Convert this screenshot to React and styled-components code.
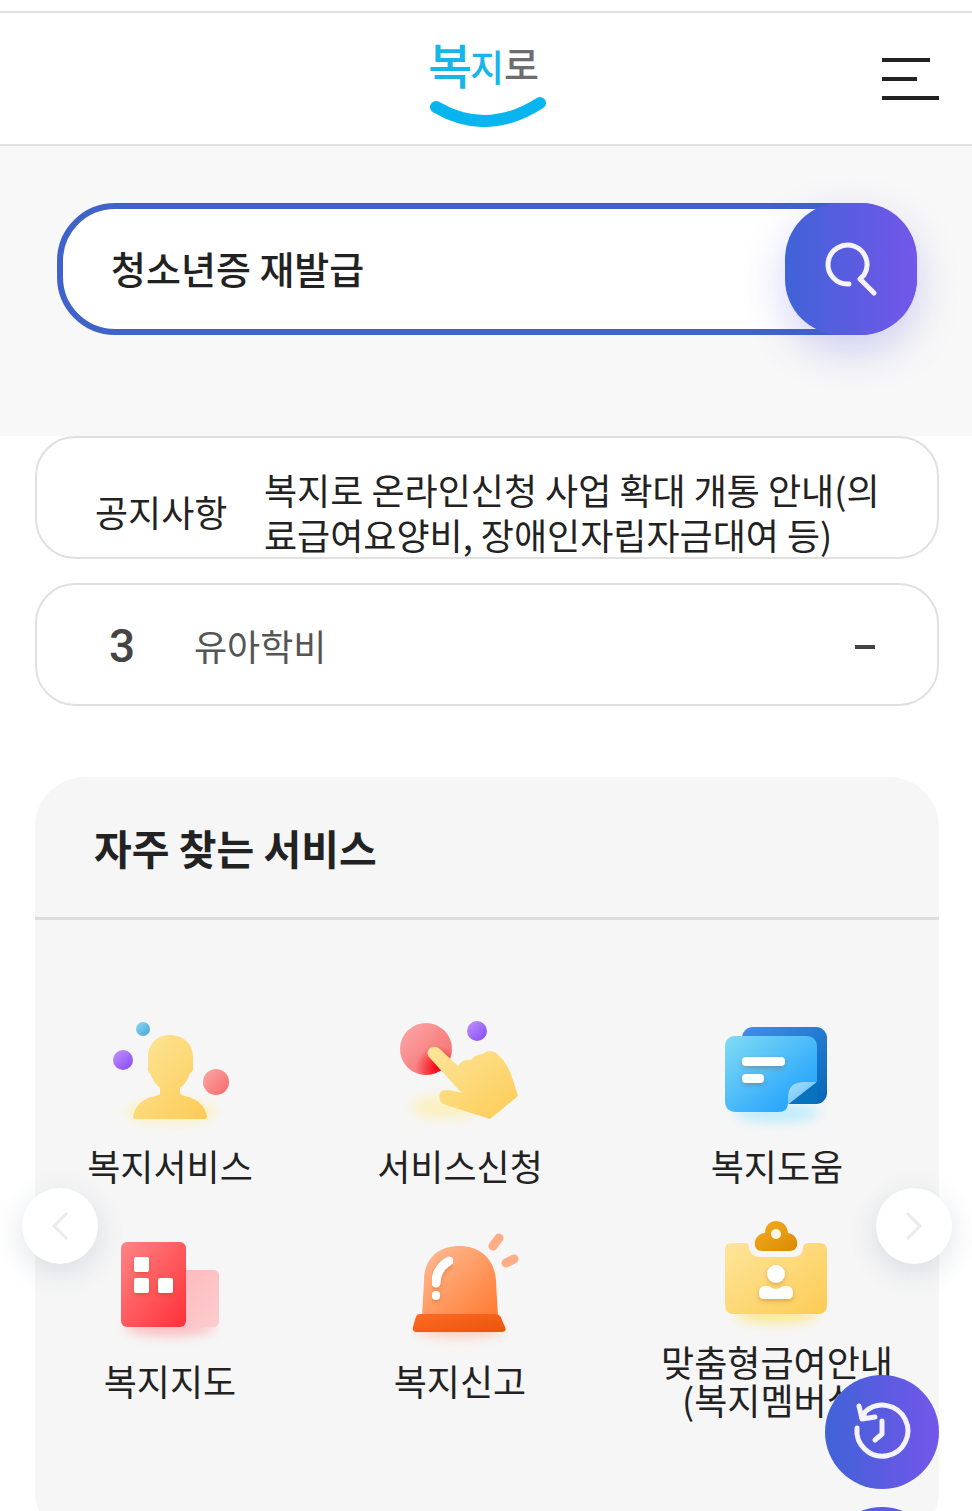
import React from "react";
import styled, { createGlobalStyle } from "styled-components";

const GlobalStyle = createGlobalStyle`
  * { box-sizing: border-box; }
  body { margin: 0; background: #fff; color: #222; }
  body, button, input {
    font-family: "Noto Sans CJK KR", "Noto Sans", sans-serif;
  }
  button { border: 0; padding: 0; cursor: pointer; }
  h2, p, ul { margin: 0; padding: 0; }
  svg { display: block; overflow: visible; }
`;

const brand = "linear-gradient(90deg, #4063d8 0%, #5a5ce0 50%, #7357ea 100%)";

const Screen = styled.div`
  position: relative;
  height: 100vh;
  overflow: hidden;
`;

const Scroller = styled.div`
  height: 100%;
  overflow-y: auto;
  scrollbar-width: none;
  padding-top: 11px;
`;

const Header = styled.header`
  display: grid;
  grid-template-columns: 1fr auto 1fr;
  align-items: center;
  height: 135px;
  padding: 0 33px;
  border: solid #e0e0e0;
  border-width: 2px 0;
`;

const LogoLink = styled.a`
  grid-column: 2;
  text-decoration: none;
`;

const MenuButton = styled.button`
  justify-self: end;
  background: none;
`;

const SearchSection = styled.section`
  height: 290px;
  padding: 57px 55px 0 57px;
  background: #f8f8f8;
`;

const SearchForm = styled.form`
  display: flex;
  align-items: center;
  height: 132px;
  border: 6px solid #4063c9;
  border-radius: 58px;
  background: #fff;
`;

const SearchInput = styled.input`
  flex: 1;
  min-width: 0;
  height: 100%;
  padding: 0 0 4px 48px;
  border: 0;
  outline: 0;
  background: none;
  color: #222;
  font-size: 38px;
  font-weight: 500;
`;

const SearchButton = styled.button`
  display: grid;
  place-items: center;
  flex: none;
  width: 132px;
  height: 132px;
  margin-right: -6px;
  border-radius: 56px;
  background: ${brand};
  box-shadow: 0 16px 40px rgba(80, 80, 220, 0.25);
`;

const Main = styled.main`
  display: flex;
  flex-direction: column;
  padding: 0 33px 24px 35px;
`;

const Bar = styled.section`
  display: flex;
  align-items: center;
  height: 123px;
  margin-bottom: 24px;
  padding: 0 44px 0 58px;
  border: 2px solid #e0e0e0;
  border-radius: 40px;
  background: #fff;
  font-size: 36px;
`;

const NoticeTitle = styled.h2`
  flex: none;
  width: 169px;
  padding-top: 28px;
  line-height: 45px;
  font-size: 36px;
  font-weight: 400;
`;

const NoticeText = styled.a`
  padding-top: 28px;
  color: #222;
  line-height: 45px;
  text-decoration: none;
  word-break: break-all;
`;

const Rank = styled.span`
  width: 99px;
  padding: 2px 0 0 14px;
  color: #444;
  font-family: Roboto, sans-serif;
  font-size: 46px;
  font-weight: 500;
`;

const RankName = styled.a`
  flex: 1;
  color: #555;
  text-decoration: none;
`;

const RankChange = styled.span`
  width: 20px;
  height: 4px;
  margin: 4px 18px 0 0;
  background: #444;
`;

const Panel = styled.section`
  margin-top: 47px;
  border-radius: 50px;
  background: #f6f6f6;
`;

const PanelTitle = styled.h2`
  height: 143px;
  padding-left: 59px;
  border-bottom: 3px solid #ddd;
  line-height: 140px;
  font-size: 41px;
  font-weight: 700;
`;

const Carousel = styled.div`
  position: relative;
  padding: 72px 0 120px;
`;

const ServiceGrid = styled.ul`
  display: grid;
  grid-template-columns: 270fr 310fr 324fr;
  grid-auto-rows: 215px;
  list-style: none;
`;

const ServiceItem = styled.li`
  display: grid;
  place-items: center;
`;

const ServiceLink = styled.a`
  display: flex;
  flex-direction: column;
  align-items: center;
  gap: 20px;
  color: #222;
  font-size: 36px;
  line-height: 38px;
  text-align: center;
  text-decoration: none;
  white-space: pre-line;
`;

const ArrowButton = styled.button`
  position: absolute;
  top: 268px;
  ${(p) => (p.$side === "left" ? "left: -13px;" : "right: -13px;")}
  display: grid;
  place-items: center;
  width: 76px;
  height: 76px;
  border-radius: 50%;
  background: #fff;
  box-shadow: 0 8px 28px rgba(60, 80, 110, 0.16);
`;

const FloatingMenu = styled.div`
  position: absolute;
  right: 33px;
  bottom: -110px;
  display: flex;
  flex-direction: column;
  gap: 18px;
`;

const FloatingButton = styled.button`
  display: grid;
  place-items: center;
  width: 114px;
  height: 114px;
  border-radius: 50%;
  background: ${brand};
`;

const Glyph = styled.text`
  font-family: "Noto Sans CJK KR", sans-serif;
  font-weight: 500;
  font-size: ${(p) => p.$size}px;
  fill: ${(p) => p.$color};
`;

function Logo() {
  return (
    <svg width="118" height="96" viewBox="0 0 118 96" role="img" aria-label="복지로">
      <Glyph x="1" y="53" $size={48} $color="#16b5ea">복</Glyph>
      <Glyph x="43" y="51" $size={37} $color="#16b5ea">지</Glyph>
      <Glyph x="77" y="48" $size={38} $color="#6d6d70">로</Glyph>
      <path d="M9 76 Q60 106 113 72" fill="none" stroke="#08b5ef" strokeWidth="12" strokeLinecap="round" />
    </svg>
  );
}

function Gradient({ id, from, to }) {
  return (
    <linearGradient id={id} x1="0" y1="0" x2="1" y2="1">
      <stop offset="0" stopColor={from} />
      <stop offset="1" stopColor={to} />
    </linearGradient>
  );
}

function Icon({ id, children }) {
  return (
    <svg width="130" height="110" viewBox="0 0 130 110" aria-hidden="true">
      <defs>
        <Gradient id={`${id}-yellow`} from="#fde69a" to="#fdcb55" />
        <Gradient id={`${id}-red`} from="#fca9a9" to="#f56868" />
        <Gradient id={`${id}-violet`} from="#c094ff" to="#8648f2" />
        <filter id={`${id}-blur`} x="-50%" y="-100%" width="200%" height="300%">
          <feGaussianBlur stdDeviation="6" />
        </filter>
        <filter id={`${id}-drop`} x="-30%" y="-30%" width="160%" height="180%">
          <feDropShadow dx="0" dy="2" stdDeviation="2" floodColor="#8a3b00" floodOpacity="0.3" />
        </filter>
      </defs>
      {children}
    </svg>
  );
}

function PersonIcon() {
  return (
    <Icon id="person">
      <defs><Gradient id="person-sky" from="#90d8f4" to="#45a5d4" /></defs>
      <ellipse cx="66" cy="96" rx="46" ry="11" fill="#ffed98" opacity=".55" filter="url(#person-blur)" />
      <path d="M65 19C51 19 43 29 43 41V51C42 52 43 56 45 57C47 64 51 68 55 72V77C55 80 48 80 43 82C34 86 29 93 28 101Q28 103 30 103H100Q102 103 102 101C101 93 96 86 87 82C82 80 75 80 75 76V72C80 68 83 64 85 57C88 56 89 52 88 50V41C88 29 79 19 65 19Z" fill="url(#person-yellow)" />
      <circle cx="38" cy="13" r="7" fill="url(#person-sky)" />
      <circle cx="18" cy="44" r="10" fill="url(#person-violet)" />
      <circle cx="111" cy="66" r="13" fill="url(#person-red)" />
    </Icon>
  );
}

function TouchIcon() {
  return (
    <Icon id="touch">
      <defs>
        <radialGradient id="touch-glow" cx="0.72" cy="0.86" r="0.42">
          <stop offset="0" stopColor="#f50010" />
          <stop offset="1" stopColor="#f50010" stopOpacity="0" />
        </radialGradient>
      </defs>
      <ellipse cx="50" cy="91" rx="34" ry="12" fill="#ffed98" opacity=".55" filter="url(#touch-blur)" />
      <circle cx="31" cy="33" r="26" fill="url(#touch-red)" />
      <circle cx="31" cy="33" r="26" fill="url(#touch-glow)" />
      <circle cx="82" cy="15" r="10" fill="url(#touch-violet)" />
      <path d="M34 41C30 36 35 30 40 31C43 31 45 33 47 35L63 50C66 45 70 43 76 44C79 40 84 38 88 38C92 34 99 34 103 39C114 48 117 61 123 80L95 103L51 89C44 87 43 80 46 76C50 72 57 75 67 77L62 72Z" fill="url(#touch-yellow)" />
    </Icon>
  );
}

function NoteIcon() {
  return (
    <Icon id="note">
      <defs>
        <Gradient id="note-back" from="#438eea" to="#0467b7" />
        <Gradient id="note-front" from="#81dcf3" to="#1499ff" />
        <Gradient id="note-fold" from="#a8e0fd" to="#5db9f3" />
      </defs>
      <ellipse cx="65" cy="97" rx="43" ry="9" fill="#9ee7ff" opacity=".65" filter="url(#note-blur)" />
      <rect x="30" y="11" width="85" height="77" rx="11" fill="url(#note-back)" />
      <path d="M23 20H94C101 20 105 24 105 31V66H92Q76 66 76 81V87Q76 96 66 96H24C17 96 13 92 13 85V31C13 24 17 20 23 20Z" fill="url(#note-front)" />
      <path d="M105 66L77 88H76V81Q76 66 92 66Z" fill="url(#note-fold)" />
      <path d="M105 66V88H77Z" fill="#0872bf" />
      <g fill="#fff" filter="url(#note-drop)">
        <rect x="30" y="41" width="43" height="9" rx="4" />
        <rect x="30" y="58" width="22" height="9" rx="4" />
      </g>
    </Icon>
  );
}

function BuildingIcon() {
  return (
    <Icon id="building">
      <defs>
        <Gradient id="building-front" from="#ff8585" to="#ff3038" />
        <Gradient id="building-side" from="#ffb7ba" to="#fccdcf" />
      </defs>
      <ellipse cx="65" cy="96" rx="45" ry="9" fill="#ff979e" opacity=".6" filter="url(#building-blur)" />
      <rect x="66" y="39" width="48" height="57" rx="5" fill="url(#building-side)" />
      <rect x="16" y="11" width="65" height="85" rx="6" fill="url(#building-front)" />
      <g fill="#fff" filter="url(#building-drop)">
        <rect x="29" y="26" width="15" height="15" rx="2" />
        <rect x="29" y="47" width="15" height="15" rx="2" />
        <rect x="53" y="47" width="15" height="15" rx="2" />
      </g>
    </Icon>
  );
}

function SirenIcon() {
  return (
    <Icon id="siren">
      <defs>
        <Gradient id="siren-dome" from="#ffbe98" to="#ff792f" />
        <Gradient id="siren-base" from="#ff6a25" to="#e8540b" />
      </defs>
      <ellipse cx="65" cy="98" rx="45" ry="8" fill="#ffb894" opacity=".65" filter="url(#siren-blur)" />
      <path d="M27 86L29 50C29 27 44 15 64 15C86 15 100 29 101 50L103 86Z" fill="url(#siren-dome)" />
      <path d="M25 83H99C104 83 106 85 107 89L110 96C112 100 109 101 106 101H22C19 101 17 99 18 96L20 89C21 85 22 83 25 83Z" fill="url(#siren-base)" />
      <g fill="none" stroke="#fff" strokeLinecap="round" filter="url(#siren-drop)">
        <path d="M54 30C45 35 41 42 41 52" strokeWidth="9" />
        <path d="M41 64V65" strokeWidth="8" />
      </g>
      <path d="M98 15L104 7M111 32L119 28" fill="none" stroke="#ffad86" strokeWidth="9" strokeLinecap="round" />
    </Icon>
  );
}

function BadgeIcon() {
  return (
    <Icon id="badge">
      <defs><Gradient id="badge-clip" from="#f2ae24" to="#dc8900" /></defs>
      <ellipse cx="65" cy="103" rx="42" ry="8" fill="#ffe15e" opacity=".65" filter="url(#badge-blur)" />
      <path d="M19 31H34Q37 31 37 35C38 42 43 45 49 45H80C87 45 91 42 91 35Q92 31 96 31H108Q115 31 115 38V93Q115 102 106 102H22Q13 102 13 93V38Q13 31 19 31Z" fill="url(#badge-yellow)" />
      <path d="M50 39C39 39 41 22 53 21C53 5 75 5 76 21C87 22 89 39 78 39Z" fill="url(#badge-clip)" />
      <circle cx="64" cy="22" r="5" fill="#fff8e5" />
      <g fill="#fff" filter="url(#badge-drop)">
        <circle cx="64" cy="62" r="9" />
        <path d="M54 74C60 74 59 77 64 77C69 77 68 74 74 74C79 74 81 77 81 81C81 85 79 87 76 87H52C49 87 47 85 47 81C47 77 49 74 54 74Z" />
      </g>
    </Icon>
  );
}

function Chevron({ d }) {
  return (
    <svg width="24" height="32" viewBox="0 0 24 32" fill="none" stroke="#ebebed" strokeWidth="3" aria-hidden="true">
      <path d={d} />
    </svg>
  );
}

const services = [
  { label: "복지서비스", Art: PersonIcon },
  { label: "서비스신청", Art: TouchIcon },
  { label: "복지도움", Art: NoteIcon },
  { label: "복지지도", Art: BuildingIcon },
  { label: "복지신고", Art: SirenIcon },
  { label: "맞춤형급여안내\n(복지멤버십)", Art: BadgeIcon },
];

export default function App() {
  return (
    <Screen>
      <GlobalStyle />
      <Scroller>
        <Header>
          <LogoLink href="#home"><Logo /></LogoLink>
          <MenuButton type="button" aria-label="전체 메뉴">
            <svg width="57" height="44" viewBox="0 0 57 44" fill="none" stroke="#222" strokeWidth="4" aria-hidden="true">
              <path d="M0 3H48M0 22H35M0 41H57" />
            </svg>
          </MenuButton>
        </Header>

        <SearchSection>
          <SearchForm role="search" onSubmit={(e) => e.preventDefault()}>
            <SearchInput type="text" aria-label="검색어" defaultValue="청소년증 재발급" />
            <SearchButton type="submit" aria-label="검색">
              <svg width="52" height="56" viewBox="0 0 52 56" fill="none" stroke="#f4f3ff" strokeWidth="5" strokeLinecap="round" strokeLinejoin="round" aria-hidden="true">
                <path d="M24 43A19.5 19.5 0 1 1 39 34L35 38L49 52" />
              </svg>
            </SearchButton>
          </SearchForm>
        </SearchSection>

        <Main>
          <Bar>
            <NoticeTitle>공지사항</NoticeTitle>
            <NoticeText href="#notice">
              복지로 온라인신청 사업 확대 개통 안내(의료급여요양비, 장애인자립자금대여 등)
            </NoticeText>
          </Bar>
          <Bar>
            <Rank>3</Rank>
            <RankName href="#rank">유아학비</RankName>
            <RankChange role="img" aria-label="변동 없음" />
          </Bar>

          <Panel>
            <PanelTitle>자주 찾는 서비스</PanelTitle>
            <Carousel>
              <ServiceGrid>
                {services.map(({ label, Art }) => (
                  <ServiceItem key={label}>
                    <ServiceLink href="#service">
                      <Art />
                      <span>{label}</span>
                    </ServiceLink>
                  </ServiceItem>
                ))}
              </ServiceGrid>
              <ArrowButton type="button" $side="left" aria-label="이전">
                <Chevron d="M19 3L6 16L19 29" />
              </ArrowButton>
              <ArrowButton type="button" $side="right" aria-label="다음">
                <Chevron d="M5 3L18 16L5 29" />
              </ArrowButton>
            </Carousel>
          </Panel>
        </Main>
      </Scroller>

      <FloatingMenu>
        <FloatingButton type="button" aria-label="최근 이용 내역">
          <svg width="58" height="58" viewBox="0 0 58 58" fill="none" stroke="#f4f3ff" strokeWidth="5" strokeLinecap="round" strokeLinejoin="round" aria-hidden="true">
            <path d="M4 25A25.5 25.5 0 1 0 12 9L10 15" />
            <path d="M6 3L9 16L22 14" />
            <path d="M29 18V31L22 37" />
          </svg>
        </FloatingButton>
        <FloatingButton type="button" aria-label="맨 위로" />
      </FloatingMenu>
    </Screen>
  );
}
